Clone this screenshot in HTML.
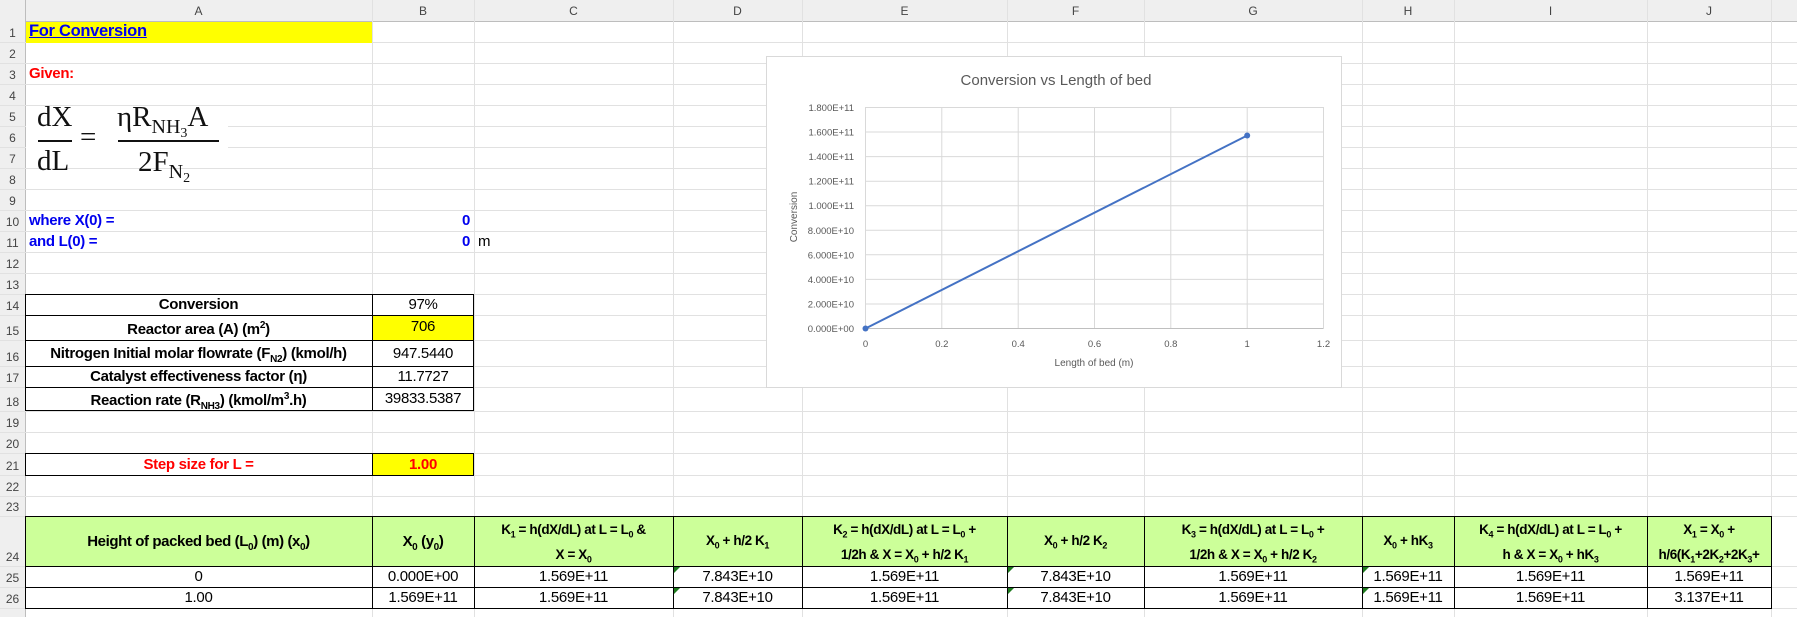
<!DOCTYPE html>
<html><head><meta charset="utf-8"><style>
body{margin:0;width:1797px;height:617px;overflow:hidden;background:#fff;font-family:"Liberation Sans",Arial,sans-serif;position:relative}
.a{position:absolute}
.h{position:absolute;left:0;width:1797px;height:1px;background:#e1e1e1}
.v{position:absolute;top:0;width:1px;height:617px;background:#e1e1e1}
.rn{position:absolute;left:0;width:25px;text-align:center;font-size:12px;color:#444}
.cl{position:absolute;top:0;height:21px;line-height:22px;text-align:center;font-size:12px;color:#444}
.t{position:absolute;font-size:15px;letter-spacing:-0.3px;white-space:nowrap}
.b{font-weight:bold}
.c{text-align:center}
.hd{position:absolute;font-size:13.5px;font-weight:bold;letter-spacing:-0.4px;text-align:center;line-height:20px;white-space:nowrap}
.tri{position:absolute;width:0;height:0;border-top:6px solid #1e7b1e;border-right:6px solid transparent}
.m{font-family:"Liberation Serif","DejaVu Serif",serif;position:absolute;color:#111}
</style></head><body>
<div class="a" style="left:0;top:0;width:1797px;height:21px;background:#efefef;border-bottom:1px solid #bdbdbd"></div>
<div class="a" style="left:0;top:0;width:25px;height:617px;background:#efefef;border-right:1px solid #bdbdbd"></div>
<div class="h" style="top:42px"></div><div class="h" style="top:63px"></div><div class="h" style="top:84px"></div><div class="h" style="top:105px"></div><div class="h" style="top:126px"></div><div class="h" style="top:147px"></div><div class="h" style="top:168px"></div><div class="h" style="top:189px"></div><div class="h" style="top:210px"></div><div class="h" style="top:231px"></div><div class="h" style="top:252px"></div><div class="h" style="top:273px"></div><div class="h" style="top:294px"></div><div class="h" style="top:315px"></div><div class="h" style="top:340px"></div><div class="h" style="top:366px"></div><div class="h" style="top:387px"></div><div class="h" style="top:411px"></div><div class="h" style="top:432px"></div><div class="h" style="top:453px"></div><div class="h" style="top:475px"></div><div class="h" style="top:496px"></div><div class="h" style="top:516px"></div><div class="h" style="top:566px"></div><div class="h" style="top:587px"></div><div class="h" style="top:608px"></div>
<div class="v" style="left:372px"></div><div class="v" style="left:474px"></div><div class="v" style="left:673px"></div><div class="v" style="left:802px"></div><div class="v" style="left:1007px"></div><div class="v" style="left:1144px"></div><div class="v" style="left:1362px"></div><div class="v" style="left:1454px"></div><div class="v" style="left:1647px"></div><div class="v" style="left:1771px"></div>
<div class="cl" style="left:25px;width:347px">A</div><div class="cl" style="left:372px;width:102px">B</div><div class="cl" style="left:474px;width:199px">C</div><div class="cl" style="left:673px;width:129px">D</div><div class="cl" style="left:802px;width:205px">E</div><div class="cl" style="left:1007px;width:137px">F</div><div class="cl" style="left:1144px;width:218px">G</div><div class="cl" style="left:1362px;width:92px">H</div><div class="cl" style="left:1454px;width:193px">I</div><div class="cl" style="left:1647px;width:124px">J</div>
<div class="rn" style="top:26px">1</div><div class="rn" style="top:47px">2</div><div class="rn" style="top:68px">3</div><div class="rn" style="top:89px">4</div><div class="rn" style="top:110px">5</div><div class="rn" style="top:131px">6</div><div class="rn" style="top:152px">7</div><div class="rn" style="top:173px">8</div><div class="rn" style="top:194px">9</div><div class="rn" style="top:215px">10</div><div class="rn" style="top:236px">11</div><div class="rn" style="top:257px">12</div><div class="rn" style="top:278px">13</div><div class="rn" style="top:299px">14</div><div class="rn" style="top:324px">15</div><div class="rn" style="top:350px">16</div><div class="rn" style="top:371px">17</div><div class="rn" style="top:395px">18</div><div class="rn" style="top:416px">19</div><div class="rn" style="top:437px">20</div><div class="rn" style="top:459px">21</div><div class="rn" style="top:480px">22</div><div class="rn" style="top:500px">23</div><div class="rn" style="top:550px">24</div><div class="rn" style="top:571px">25</div><div class="rn" style="top:592px">26</div>

<div class="a" style="left:26px;top:22px;width:346px;height:21px;background:#ffff00"></div>
<div class="t b" style="left:29px;top:22px;font-size:16.5px;color:#0000ee;text-decoration:underline">For Conversion</div>
<div class="t b" style="left:29px;top:65px;color:#ff0000">Given:</div>
<div class="a" style="left:26px;top:106px;width:202px;height:62px;background:#fff"></div>
<div class="m" style="left:37px;top:101px;font-size:29px">dX</div>
<div class="a" style="left:38px;top:140px;width:34px;height:2px;background:#111"></div>
<div class="m" style="left:37px;top:145px;font-size:29px">dL</div>
<div class="m" style="left:80px;top:121px;font-size:29px">=</div>
<div class="m" style="left:117px;top:101px;font-size:29px;white-space:nowrap">ηR<span style="font-size:20px;position:relative;top:7px">NH<span style="font-size:14px;position:relative;top:4px">3</span></span>A</div>
<div class="a" style="left:118px;top:140px;width:101px;height:2px;background:#111"></div>
<div class="m" style="left:138px;top:146px;font-size:29px;white-space:nowrap">2F<span style="font-size:20px;position:relative;top:7px">N<span style="font-size:14px;position:relative;top:4px">2</span></span></div>
<div class="t b" style="left:29px;top:212px;color:#0000ee">where X(0) =</div>
<div class="t b" style="left:372px;width:98px;text-align:right;top:212px;color:#0000ee">0</div>
<div class="t b" style="left:29px;top:233px;color:#0000ee">and L(0) =</div>
<div class="t b" style="left:372px;width:98px;text-align:right;top:233px;color:#0000ee">0</div>
<div class="t" style="left:478px;top:233px">m</div>
<div class="a" style="left:373px;top:315px;width:101px;height:25px;background:#ffff00"></div>
<div class="a" style="left:25px;top:294px;width:449px;height:117px;border:1px solid #000;box-sizing:border-box"></div>
<div class="a" style="left:372px;top:294px;width:1px;height:117px;background:#000"></div>
<div class="a" style="left:25px;top:315px;width:449px;height:1px;background:#000"></div>
<div class="a" style="left:25px;top:340px;width:449px;height:1px;background:#000"></div>
<div class="a" style="left:25px;top:366px;width:449px;height:1px;background:#000"></div>
<div class="a" style="left:25px;top:387px;width:449px;height:1px;background:#000"></div>
<div class="t b c" style="left:25px;width:347px;top:296px">Conversion</div>
<div class="t c" style="left:372px;width:102px;top:296px">97%</div>
<div class="t b c" style="left:25px;width:347px;top:320px">Reactor area (A) (m<sup style="font-size:10px">2</sup>)</div>
<div class="t c" style="left:372px;width:102px;top:318px">706</div>
<div class="t b c" style="left:25px;width:347px;top:345px">Nitrogen Initial molar flowrate (F<sub style="font-size:10px">N2</sub>) (kmol/h)</div>
<div class="t c" style="left:372px;width:102px;top:345px">947.5440</div>
<div class="t b c" style="left:25px;width:347px;top:368px">Catalyst effectiveness factor (η)</div>
<div class="t c" style="left:372px;width:102px;top:368px">11.7727</div>
<div class="t b c" style="left:25px;width:347px;top:391px">Reaction rate (R<sub style="font-size:10px">NH3</sub>) (kmol/m<sup style="font-size:10px">3</sup>.h)</div>
<div class="t c" style="left:372px;width:102px;top:390px">39833.5387</div>
<div class="a" style="left:373px;top:453px;width:101px;height:22px;background:#ffff00"></div>
<div class="a" style="left:25px;top:453px;width:449px;height:23px;border:1px solid #000;box-sizing:border-box"></div>
<div class="a" style="left:372px;top:453px;width:1px;height:23px;background:#000"></div>
<div class="t b c" style="left:25px;width:347px;top:456px;color:#ff0000">Step size for L =</div>
<div class="t b c" style="left:372px;width:102px;top:456px;color:#ff0000">1.00</div>
<div class="a" style="left:25px;top:516px;width:1746px;height:50px;background:#ccff99"></div>
<div class="a" style="left:25px;top:516px;width:1747px;height:93px;border:1px solid #000;box-sizing:border-box"></div>
<div class="a" style="left:25px;top:566px;width:1747px;height:1px;background:#000"></div>
<div class="a" style="left:25px;top:587px;width:1747px;height:1px;background:#000"></div>
<div class="a" style="left:372px;top:516px;width:1px;height:93px;background:#000"></div><div class="a" style="left:474px;top:516px;width:1px;height:93px;background:#000"></div><div class="a" style="left:673px;top:516px;width:1px;height:93px;background:#000"></div><div class="a" style="left:802px;top:516px;width:1px;height:93px;background:#000"></div><div class="a" style="left:1007px;top:516px;width:1px;height:93px;background:#000"></div><div class="a" style="left:1144px;top:516px;width:1px;height:93px;background:#000"></div><div class="a" style="left:1362px;top:516px;width:1px;height:93px;background:#000"></div><div class="a" style="left:1454px;top:516px;width:1px;height:93px;background:#000"></div><div class="a" style="left:1647px;top:516px;width:1px;height:93px;background:#000"></div>
<div class="hd" style="left:25px;width:347px;top:532px;font-size:15px">Height of packed bed (L<sub style="font-size:10px">0</sub>) (m) (x<sub style="font-size:10px">0</sub>)</div>
<div class="hd" style="left:372px;width:102px;top:532px;font-size:15px">X<sub style="font-size:10px">0</sub> (y<sub style="font-size:10px">0</sub>)</div>
<div class="hd" style="left:474px;width:199px;top:520px">K<sub style="font-size:9px">1</sub> = h(dX/dL) at L = L<sub style="font-size:9px">0</sub> &amp;<br>X = X<sub style="font-size:9px">0</sub></div>
<div class="hd" style="left:673px;width:129px;top:531px">X<sub style="font-size:9px">0</sub> + h/2 K<sub style="font-size:9px">1</sub></div>
<div class="hd" style="left:802px;width:205px;top:520px">K<sub style="font-size:9px">2</sub> = h(dX/dL) at L = L<sub style="font-size:9px">0</sub> +<br>1/2h &amp; X = X<sub style="font-size:9px">0</sub> + h/2 K<sub style="font-size:9px">1</sub></div>
<div class="hd" style="left:1007px;width:137px;top:531px">X<sub style="font-size:9px">0</sub> + h/2 K<sub style="font-size:9px">2</sub></div>
<div class="hd" style="left:1144px;width:218px;top:520px">K<sub style="font-size:9px">3</sub> = h(dX/dL) at L = L<sub style="font-size:9px">0</sub> +<br>1/2h &amp; X = X<sub style="font-size:9px">0</sub> + h/2 K<sub style="font-size:9px">2</sub></div>
<div class="hd" style="left:1362px;width:92px;top:531px">X<sub style="font-size:9px">0</sub> + hK<sub style="font-size:9px">3</sub></div>
<div class="hd" style="left:1454px;width:193px;top:520px">K<sub style="font-size:9px">4</sub> = h(dX/dL) at L = L<sub style="font-size:9px">0</sub> +<br>h &amp; X = X<sub style="font-size:9px">0</sub> + hK<sub style="font-size:9px">3</sub></div>
<div class="hd" style="left:1647px;width:124px;top:520px;overflow:hidden">X<sub style="font-size:9px">1</sub> = X<sub style="font-size:9px">0</sub> +<br>h/6(K<sub style="font-size:9px">1</sub>+2K<sub style="font-size:9px">2</sub>+2K<sub style="font-size:9px">3</sub>+</div>
<div class="t c" style="left:25px;width:347px;top:568px">0</div>
<div class="t c" style="left:372px;width:102px;top:568px">0.000E+00</div>
<div class="t c" style="left:474px;width:199px;top:568px">1.569E+11</div>
<div class="t c" style="left:673px;width:129px;top:568px">7.843E+10</div>
<div class="t c" style="left:802px;width:205px;top:568px">1.569E+11</div>
<div class="t c" style="left:1007px;width:137px;top:568px">7.843E+10</div>
<div class="t c" style="left:1144px;width:218px;top:568px">1.569E+11</div>
<div class="t c" style="left:1362px;width:92px;top:568px">1.569E+11</div>
<div class="t c" style="left:1454px;width:193px;top:568px">1.569E+11</div>
<div class="t c" style="left:1647px;width:124px;top:568px">1.569E+11</div>
<div class="t c" style="left:25px;width:347px;top:589px">1.00</div>
<div class="t c" style="left:372px;width:102px;top:589px">1.569E+11</div>
<div class="t c" style="left:474px;width:199px;top:589px">1.569E+11</div>
<div class="t c" style="left:673px;width:129px;top:589px">7.843E+10</div>
<div class="t c" style="left:802px;width:205px;top:589px">1.569E+11</div>
<div class="t c" style="left:1007px;width:137px;top:589px">7.843E+10</div>
<div class="t c" style="left:1144px;width:218px;top:589px">1.569E+11</div>
<div class="t c" style="left:1362px;width:92px;top:589px">1.569E+11</div>
<div class="t c" style="left:1454px;width:193px;top:589px">1.569E+11</div>
<div class="t c" style="left:1647px;width:124px;top:589px">3.137E+11</div>
<div class="tri" style="left:674px;top:567px"></div><div class="tri" style="left:674px;top:588px"></div><div class="tri" style="left:1008px;top:567px"></div><div class="tri" style="left:1008px;top:588px"></div><div class="tri" style="left:1363px;top:567px"></div><div class="tri" style="left:1363px;top:588px"></div>

<svg class="a" style="left:766px;top:56px" width="576" height="332" viewBox="766 56 576 332" font-family="Liberation Sans, Arial, sans-serif">
<rect x="766.5" y="56.5" width="575" height="331" fill="#fff" stroke="#d9d9d9"/>
<text x="1056" y="85" font-size="15" fill="#595959" text-anchor="middle">Conversion vs Length of bed</text>
<g stroke="#d9d9d9" stroke-width="1">
<line x1="865" y1="107.5" x2="1323" y2="107.5"/><line x1="865" y1="132" x2="1323" y2="132"/><line x1="865" y1="156.6" x2="1323" y2="156.6"/><line x1="865" y1="181.2" x2="1323" y2="181.2"/><line x1="865" y1="205.7" x2="1323" y2="205.7"/><line x1="865" y1="230.3" x2="1323" y2="230.3"/><line x1="865" y1="254.8" x2="1323" y2="254.8"/><line x1="865" y1="279.4" x2="1323" y2="279.4"/><line x1="865" y1="304" x2="1323" y2="304"/><line x1="865" y1="328.5" x2="1323" y2="328.5"/>
<line x1="865.5" y1="107" x2="865.5" y2="329"/><line x1="941.8" y1="107" x2="941.8" y2="329"/><line x1="1018.2" y1="107" x2="1018.2" y2="329"/><line x1="1094.5" y1="107" x2="1094.5" y2="329"/><line x1="1170.8" y1="107" x2="1170.8" y2="329"/><line x1="1247.2" y1="107" x2="1247.2" y2="329"/><line x1="1323.5" y1="107" x2="1323.5" y2="329"/>
</g>
<line x1="865" y1="328.5" x2="1323" y2="328.5" stroke="#bfbfbf"/>
<g font-size="9.5" fill="#595959" text-anchor="end">
<text x="854" y="111">1.800E+11</text><text x="854" y="135.5">1.600E+11</text><text x="854" y="160">1.400E+11</text><text x="854" y="184.7">1.200E+11</text><text x="854" y="209.2">1.000E+11</text><text x="854" y="233.8">8.000E+10</text><text x="854" y="258.3">6.000E+10</text><text x="854" y="282.9">4.000E+10</text><text x="854" y="307.5">2.000E+10</text><text x="854" y="332">0.000E+00</text>
</g>
<g font-size="9.5" fill="#595959" text-anchor="middle">
<text x="865.5" y="347">0</text><text x="941.8" y="347">0.2</text><text x="1018.2" y="347">0.4</text><text x="1094.5" y="347">0.6</text><text x="1170.8" y="347">0.8</text><text x="1247.2" y="347">1</text><text x="1323.5" y="347">1.2</text>
<text x="1094" y="366" font-size="10">Length of bed (m)</text>
<text transform="translate(797,217) rotate(-90)" font-size="10">Conversion</text>
</g>
<line x1="865.5" y1="328.5" x2="1247.2" y2="135.5" stroke="#4472c4" stroke-width="2"/>
<circle cx="865.5" cy="328.5" r="3" fill="#4472c4"/><circle cx="1247.2" cy="135.5" r="3" fill="#4472c4"/>
</svg>
</body></html>
